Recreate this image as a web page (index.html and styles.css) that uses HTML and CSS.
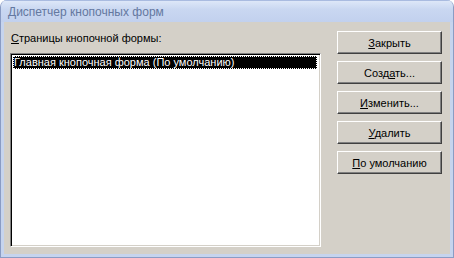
FILE: index.html
```html
<!DOCTYPE html>
<html lang="ru">
<head>
    <meta charset="UTF-8">
    <title>Диспетчер кнопочных форм</title>
    <link rel="stylesheet" href="styles.css">
</head>
<body>
    <div class="window">
        <div class="titlebar">Диспетчер кнопочных форм</div>
        <div class="content">
            <div class="left">
                <div class="label"><u>С</u>траницы кнопочной формы:</div>
                <div class="listbox">
                    <div class="item selected"><span>Главная кнопочная форма (По умолчанию)</span></div>
                </div>
            </div>
            <div class="buttons">
                <button class="btn"><u>З</u>акрыть</button>
                <button class="btn">Созд<u>а</u>ть...</button>
                <button class="btn"><u>И</u>зменить...</button>
                <button class="btn"><u>У</u>далить</button>
                <button class="btn"><u>П</u>о умолчанию</button>
            </div>
        </div>
    </div>
</body>
</html>
```

FILE: styles.css
```css
body {
    margin: 0;
    padding: 0;
    background: #fff;
    font-family: Tahoma, "DejaVu Sans", sans-serif;
}
.window {
    width: 454px;
    height: 258px;
    box-sizing: border-box;
    background: #c6d4ee;
    border: 1px solid #8a9cc4;
    border-top: none;
    border-radius: 7px 7px 0 0;
    display: flex;
    flex-direction: column;
    overflow: hidden;
}
.titlebar {
    height: 22px;
    line-height: 23px;
    padding-left: 7px;
    font-family: "Liberation Sans", Arial, sans-serif;
    font-size: 12px;
    color: #6478a0;
    background: linear-gradient(#dde7f8, #c9d7f1 40%, #c2d1ee);
    border-top: 1px solid #a9bbe0;
    box-sizing: border-box;
    flex: 0 0 22px;
}
.content {
    flex: 1;
    margin: 0 3px 3px 3px;
    background: #d4d0c8;
    display: flex;
    gap: 16px;
    padding: 9px 0 0 6px;
}
.left {
    width: 311px;
    display: flex;
    flex-direction: column;
}
.label {
    font-family: "Liberation Sans", Arial, sans-serif;
    font-size: 11px;
    line-height: 13px;
    padding-left: 1px;
    color: #000;
    margin-top: 1px;
}
.listbox {
    margin-top: 8px;
    height: 194px;
    box-sizing: border-box;
    background: #fff;
    border-top: 1px solid #808080;
    border-left: 1px solid #808080;
    border-right: 1px solid #fff;
    border-bottom: 1px solid #fff;
    box-shadow: inset 1px 1px 0 #000, inset -1px -1px 0 #d4d0c8;
    padding: 2px 3px 0 2px;
}
.item {
    font-family: "Liberation Sans", Arial, sans-serif;
    font-size: 11px;
    line-height: 11px;
    height: 13px;
    box-sizing: border-box;
    padding: 1px 0 0 1px;
    white-space: nowrap;
}
.item.selected {
    background: #000;
    color: #fff;
    outline: 1px dotted #fff;
    outline-offset: -1px;
}
.buttons {
    display: flex;
    flex-direction: column;
    gap: 7px;
    width: 105px;
}
.btn {
    height: 23px;
    width: 105px;
    box-sizing: border-box;
    padding: 0;
    font-family: "Liberation Sans", Arial, sans-serif;
    font-size: 11px;
    color: #000;
    background: #d4d0c8;
    border-top: 1px solid #fff;
    border-left: 1px solid #fff;
    border-right: 1px solid #404040;
    border-bottom: 1px solid #404040;
    box-shadow: inset -1px -1px 0 #808080;
}
```
